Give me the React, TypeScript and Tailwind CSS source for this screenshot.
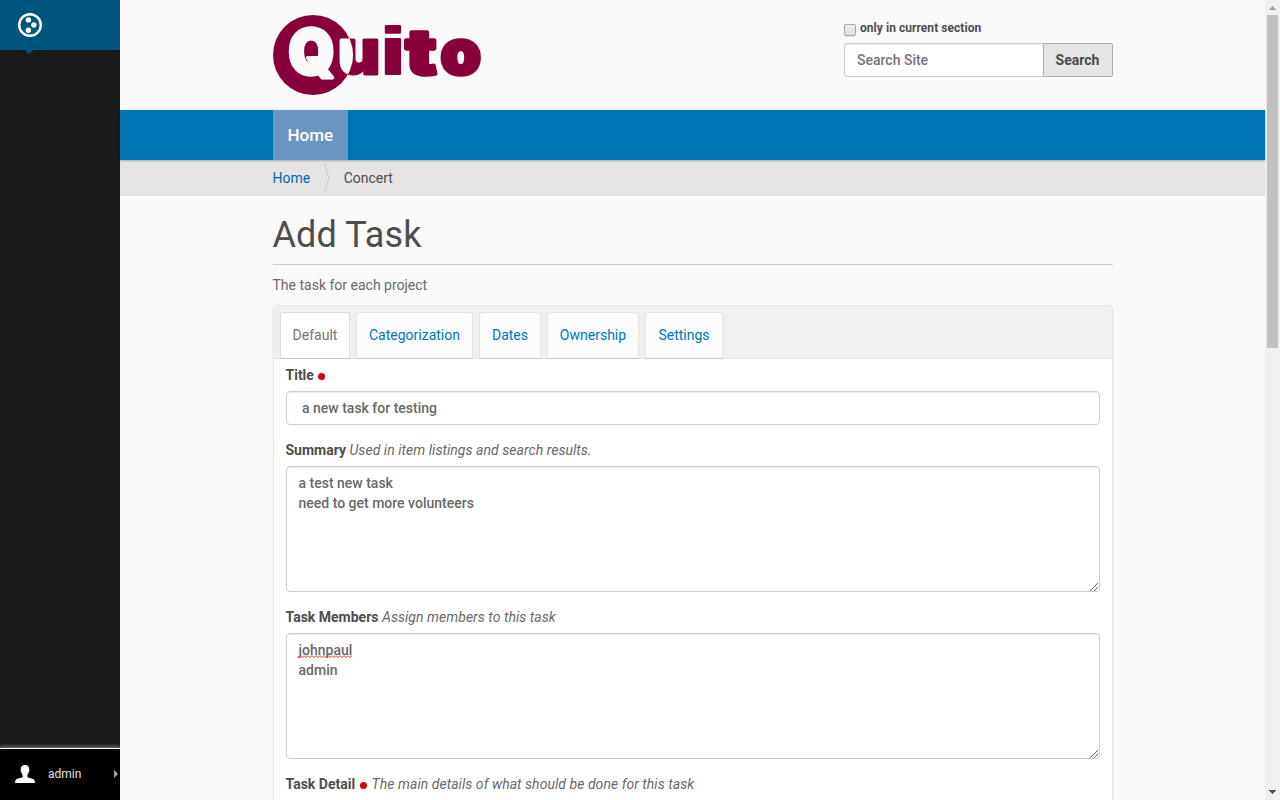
import React from "react";

function Logo() {
  return (
    <svg width="209" height="80" viewBox="0 0 209 80" className="block overflow-visible" aria-label="Quito">
      <defs>
        <clipPath id="disc">
          <circle cx="40" cy="40" r="40" />
        </clipPath>
      </defs>
      <circle cx="40" cy="40" r="40" fill="#880039" />
      <g fontFamily="Inter, sans-serif" fontWeight="900" fontSize="62" strokeWidth="3.6" strokeLinejoin="round">
        <g fill="#880039" stroke="#880039">
          <text x="65" y="58.6" textLength="42" lengthAdjust="spacingAndGlyphs" strokeWidth="3">u</text>
          <text x="106.5" y="59" textLength="27" lengthAdjust="spacingAndGlyphs" fontFamily="Liberation Sans, sans-serif" fontSize="66" strokeWidth="2">i</text>
          <text x="132.5" y="58.6" textLength="31" lengthAdjust="spacingAndGlyphs">t</text>
          <text x="167.5" y="58.6" textLength="40.5" lengthAdjust="spacingAndGlyphs">o</text>
        </g>
        <g fill="#fafafa" stroke="#fafafa">
          <text x="15.5" y="58.6" textLength="46" lengthAdjust="spacingAndGlyphs">Q</text>
          <text x="65" y="58.6" textLength="42" lengthAdjust="spacingAndGlyphs" strokeWidth="3" clipPath="url(#disc)">u</text>
        </g>
      </g>
    </svg>
  );
}

function Sidebar() {
  return (
    <aside className="flex w-[120px] shrink-0 flex-col bg-[#1a1a1a]">
      <div className="relative h-[50px] bg-[#00557f]">
        <svg width="24" height="24" viewBox="0 0 24 24" className="ml-[18px] mt-[13px] block">
          <circle cx="12" cy="12" r="10.8" fill="none" stroke="#fff" strokeWidth="2.4" />
          <circle cx="10.4" cy="6.9" r="2.7" fill="#fff" />
          <circle cx="15.9" cy="12" r="2.7" fill="#fff" />
          <circle cx="10.4" cy="17.2" r="2.7" fill="#fff" />
        </svg>
        <svg width="8" height="4" className="absolute left-[25px] top-[50px]">
          <path d="M0 0H8L4 4Z" fill="#00557f" />
        </svg>
      </div>
      <div className="flex-1" />
      <div className="flex h-[52px] items-center border-t border-white bg-black pb-[2px] text-xs text-[#e0e0e0] shadow-[0_-1px_4px_rgba(255,255,255,0.5)]">
        <svg width="20" height="18" viewBox="0 0 20 18" className="ml-[15px]">
          <path d="M10 0C7.3 0 5.8 1.4 5.8 4.1C5.5 4.2 5.4 6.2 6.2 6.7C6.4 8.2 7 9 7.6 9.7V12C6.5 13.2 1.5 13.4.5 15.2L0 18H20L19.5 15.2C18.5 13.4 13.5 13.2 12.4 12V9.7C13 9 13.6 8.2 13.8 6.7C14.6 6.2 14.5 4.2 14.2 4.1C14.2 1.4 12.7 0 10 0Z" fill="#fff" />
        </svg>
        <span className="ml-[13px]">admin</span>
        <svg width="4" height="8" className="ml-auto mr-0.5">
          <path d="M0 0L4 4L0 8Z" fill="#aaa" />
        </svg>
      </div>
    </aside>
  );
}

function Scrollbar() {
  return (
    <div className="flex w-[15px] shrink-0 flex-col items-center bg-[#f0f0f0]">
      <svg width="7" height="4" className="mb-[5px] mt-[6px] shrink-0" shapeRendering="crispEdges">
        <path d="M3 0h1v1h1v1h1v1h1v1H0V3h1V2h1V1h1z" fill="#a3a3a3" />
      </svg>
      <div className="h-[333px] w-[11px] shrink-0 bg-[#c1c1c1]" />
      <svg width="7" height="4" className="mb-[6px] mt-auto shrink-0" shapeRendering="crispEdges">
        <path d="M0 0h7v1H6v1H5v1H4v1H3V3H2V2H1V1H0z" fill="#505050" />
      </svg>
    </div>
  );
}

function Label({ title, hint, required }: { title: string; hint?: string; required?: boolean }) {
  return (
    <div className="flex h-5 items-center whitespace-pre">
      <span className="font-bold text-[#4d4d4d]">{title}</span>
      {required && <span className="ml-[4.5px] mr-[1.5px] mt-[3px] h-[7px] w-[7px] rounded-full bg-[#d9000d]" />}
      {hint && <span className="ml-[3.5px] italic tracking-[0.045px] text-[#696969]">{hint}</span>}
    </div>
  );
}

const field = "rounded border border-[#ccc] bg-white shadow-[inset_0_1px_1px_rgba(0,0,0,0.075)] font-medium text-[#696969]";

function TextArea({ children }: { children: React.ReactNode }) {
  return (
    <div className={`${field} relative mb-[15px] mt-[6px] h-[126px] px-3 py-[6px] leading-5`}>
      {children}
      <svg width="8" height="8" className="absolute bottom-0 right-px" shapeRendering="crispEdges">
        <path d="M0 7h1V6h1V5h1V4h1V3h1V2h1V1h1V0h1v1H7v1H6v1H5v1H4v1H3v1H2v1H1v1H0zM4 7h1V6h1V5h1V4h1v1H7v1H6v1H5v1H4z" fill="#666" />
      </svg>
    </div>
  );
}

const tabs = ["Default", "Categorization", "Dates", "Ownership", "Settings"];
const tabWidths = ["w-[70px]", "w-[117px]", "w-[62px]", "w-[92px]", "w-[78px]"];

export default function App() {
  return (
    <div className="flex h-[800px] w-[1280px] overflow-hidden bg-[#fafafa] font-['Roboto',sans-serif] text-sm leading-5 text-[#4d4d4d]">
      <Sidebar />
      <main className="min-w-0 flex-1">
        <header className="mx-auto flex h-[110px] w-[840px] items-start justify-between pt-[15px]">
          <div className="ml-[0.5px]">
            <Logo />
          </div>
          <div className="w-[269px] pt-[3px]">
            <div className="flex h-5 items-center text-xs font-bold tracking-[0.05px]">
              <span className="mr-[4.5px] mt-[4px] h-3 w-3 rounded-[2px] border border-[#a8a8a8] bg-linear-to-b from-[#eee] to-[#dcdcdc] shadow-[0_1px_0_rgba(0,0,0,0.08)]" />
              only in current section
            </div>
            <div className="mt-[5px] flex h-[34px]">
              <div className="flex flex-1 items-center rounded-l border border-r-0 border-[#ccc] bg-white pl-[12.5px] font-medium text-[#757575] shadow-[inset_0_1px_1px_rgba(0,0,0,0.075)]">
                Search Site
              </div>
              <button className="w-[70px] rounded-r-[2px] border border-[#aeaeae] bg-[#e5e5e5] font-bold text-[#4d4d4d]">Search</button>
            </div>
          </div>
        </header>
        <nav className="relative h-[50px] bg-[#0075b5] shadow-[0_0.5px_2px_rgba(0,0,0,0.25)]">
          <div className="mx-auto h-full w-[840px]">
            <div className="flex h-full w-[75px] items-center justify-center bg-[#6996c2] pl-[0.5px] text-[17px] font-medium text-white">Home</div>
          </div>
        </nav>
        <div className="h-9 bg-[#e5e3e4]">
          <div className="mx-auto flex h-full w-[840px] items-center">
            <span className="text-[#0069ab]">Home</span>
            <svg width="6" height="30" viewBox="0 0 6 30" className="ml-[13.5px] mr-[14px]">
              <path d="M.5 1L5 15L.5 29" fill="none" stroke="#c8c8c8" />
            </svg>
            <span>Concert</span>
          </div>
        </div>
        <section className="mx-auto w-[840px]">
          <h1 className="h-[69px] border-b border-[#ccc] pt-[19px] text-[36px] leading-10 tracking-[0.1px]">Add Task</h1>
          <p className="pb-[10px] pt-[10px] text-[#696969]">The task for each project</p>
          <div className="h-[600px] rounded border border-[#e5e5e5] bg-white shadow-[0_1px_3px_rgba(0,0,0,0.06)]">
            <div className="flex h-[53px] items-end gap-[6px] rounded-t border-b border-[#e5e5e5] bg-[#f0f0f0] pl-[6px]">
              {tabs.map((tab, i) => (
                <div
                  key={tab}
                  className={`${tabWidths[i]} -mb-px flex h-[47px] items-center justify-center rounded-t-[3px] border border-b-[#c4c4c4] pb-[2px] pl-px ${
                    i === 0 ? "border-[#ddd] bg-white text-[#757575]" : "border-[#e5e5e5] bg-[#fcfcfc] text-[#0075b5]"
                  }`}
                >
                  {tab}
                </div>
              ))}
            </div>
            <div className="px-3 pt-[6px]">
              <Label title="Title" required />
              <div className={`${field} mb-[15px] mt-[6px] flex h-[34px] items-center whitespace-pre px-3`}>{" a new task for testing"}</div>
              <Label title="Summary" hint="Used in item listings and search results." />
              <TextArea>
                a test new task
                <br />
                need to get more volunteers
              </TextArea>
              <Label title="Task Members" hint="Assign members to this task" />
              <TextArea>
                <span className="relative inline-block">
                  johnpaul
                  <svg width="54" height="3" className="absolute bottom-[2px] left-[-0.5px]">
                    <defs>
                      <pattern id="squiggle" width="4" height="3" patternUnits="userSpaceOnUse">
                        <path d="M0 2.5L2 .7L4 2.5" fill="none" stroke="#f33" strokeWidth="1" />
                      </pattern>
                    </defs>
                    <rect width="54" height="3" fill="url(#squiggle)" />
                  </svg>
                </span>
                <br />
                admin
              </TextArea>
              <Label title="Task Detail" required hint="The main details of what should be done for this task" />
            </div>
          </div>
        </section>
      </main>
      <Scrollbar />
    </div>
  );
}
